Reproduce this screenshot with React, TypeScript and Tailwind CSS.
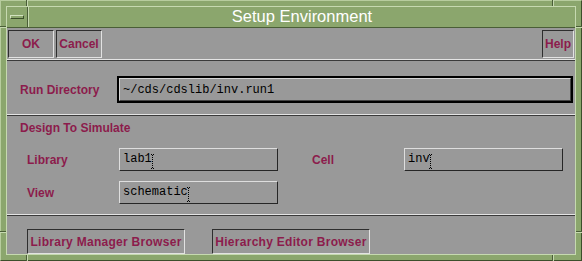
import React from "react";

const SANS = "font-['Liberation_Sans',Arial,sans-serif]";
const MONO = "font-['Liberation_Mono','Courier_New',monospace]";

function Cursor() {
  const dots: [number, number][] = [
    [1, 0], [3, 0],
    [2, 1], [2, 3], [2, 5], [2, 7], [2, 9], [2, 11], [2, 13],
    [1, 14], [3, 14],
  ];
  return (
    <svg
      width="5"
      height="15"
      viewBox="0 0 5 15"
      shapeRendering="crispEdges"
      className="absolute top-[2px] -right-[3px]"
    >
      {dots.map(([x, y], i) => (
        <rect key={i} x={x} y={y} width="1" height="1" fill="#000" />
      ))}
    </svg>
  );
}

function Field({ value, w }: { value: string; w: string }) {
  return (
    <div
      className={`${w} h-[23px] border border-t-[#dedede] border-l-[#dedede] border-b-[#262626] border-r-[#262626] bg-[#999999] flex items-center pl-[3px]`}
    >
      <span className={`relative ${MONO} text-[12px] leading-[15px] text-black`}>
        {value}
        <Cursor />
      </span>
    </div>
  );
}

function Btn({ label, w, h, extra = "" }: { label: string; w: string; h: string; extra?: string }) {
  return (
    <div
      className={`${w} ${h} border border-t-[#2e2e2e] border-l-[#2e2e2e] border-b-[#e2e2e2] border-r-[#e2e2e2] flex items-center justify-center ${SANS} font-bold text-[12px] text-[#8c1c4c] ${extra}`}
    >
      {label}
    </div>
  );
}

function Sep() {
  return <div className="h-[2px] border-t border-t-[#e4e4e4] border-b border-b-[#3a3a3a]" />;
}

function Label({ text, w }: { text: string; w: string }) {
  return (
    <div className={`${w} h-full flex items-center ${SANS} font-bold text-[12px] text-[#8c1c4c]`}>
      {text}
    </div>
  );
}

export default function App() {
  return (
    <div className="w-[582px] h-[261px] overflow-hidden">
      <div className="relative w-[582px] h-[261px] bg-[#8ba66d] border border-t-[#b7cc9e] border-l-[#b7cc9e] border-b-[#3c4f2b] border-r-[#3c4f2b] p-[5px]">
        {/* resize handle marks */}
        <div className="absolute left-[25px] top-[-1px] w-[2px] h-[6px] border-l border-l-[#4a5e37] border-r border-r-[#c6d9b0]" />
        <div className="absolute left-[551px] top-[-1px] w-[2px] h-[6px] border-l border-l-[#4a5e37] border-r border-r-[#c6d9b0]" />
        <div className="absolute left-[25px] top-[254px] w-[2px] h-[6px] border-l border-l-[#4a5e37] border-r border-r-[#c6d9b0]" />
        <div className="absolute left-[551px] top-[254px] w-[2px] h-[6px] border-l border-l-[#4a5e37] border-r border-r-[#c6d9b0]" />
        <div className="absolute left-[-1px] top-[25px] w-[6px] h-[2px] border-t border-t-[#4a5e37] border-b border-b-[#c6d9b0]" />
        <div className="absolute left-[-1px] top-[230px] w-[6px] h-[2px] border-t border-t-[#4a5e37] border-b border-b-[#c6d9b0]" />
        <div className="absolute left-[575px] top-[25px] w-[6px] h-[2px] border-t border-t-[#4a5e37] border-b border-b-[#c6d9b0]" />
        <div className="absolute left-[575px] top-[230px] w-[6px] h-[2px] border-t border-t-[#4a5e37] border-b border-b-[#c6d9b0]" />

        <div className="w-[570px] h-[249px] border border-[#c6d9b0] flex flex-col">
          {/* title bar */}
          <div className="h-[21px] flex border-b border-b-[#4a5e37]">
            <div className="w-[21px] h-full border-r border-r-[#4a5e37] flex items-center justify-center">
              <div className="w-[14px] h-[4px] border border-t-[#d2e2bf] border-l-[#d2e2bf] border-b-[#3c4f2b] border-r-[#3c4f2b]" />
            </div>
            <div className={`flex-1 h-full border-l border-l-[#c6d9b0] flex items-center justify-center text-white ${SANS} text-[16.5px] leading-[19px] pb-[1px]`}>
              Setup Environment
            </div>
          </div>

          <div className="flex-1 bg-[#999999] flex flex-col">
            {/* button row */}
            <div className="h-[31px] pt-[2px] pb-[1px] px-[1px] flex">
              <Btn label="OK" w="w-[46px]" h="h-[28px]" />
              <Btn label="Cancel" w="w-[46px]" h="h-[28px]" extra="ml-[2px]" />
              <div className="flex-1" />
              <Btn label="Help" w="w-[32px]" h="h-[28px]" />
            </div>
            <Sep />

            {/* run directory */}
            <div className="h-[53px] pl-[13px] pr-[2px] pt-[15px] flex">
              <div className="h-[27px]">
                <Label text="Run Directory" w="w-[97px]" />
              </div>
              <div className="flex-1 h-[27px] border-2 border-black">
                <div className={`w-full h-full border border-t-[#d4d4d4] border-l-[#d4d4d4] border-b-[#444444] border-r-[#444444] flex items-center pl-[3px] ${MONO} text-[12px] text-black`}>
                  ~/cds/cdslib/inv.run1
                </div>
              </div>
            </div>
            <Sep />

            {/* design to simulate */}
            <div className="h-[98px] pl-[13px] pt-[5px] flex flex-col">
              <div className={`${SANS} font-bold text-[12px] leading-[14px] text-[#8c1c4c]`}>
                Design To Simulate
              </div>
              <div className="mt-[13px] ml-[7px] flex flex-col gap-[10px]">
                <div className="h-[23px] flex">
                  <Label text="Library" w="w-[92px]" />
                  <Field value="lab1" w="w-[159px]" />
                  <div className="w-[34px]" />
                  <Label text="Cell" w="w-[92px]" />
                  <Field value="inv" w="w-[159px]" />
                </div>
                <div className="h-[23px] flex">
                  <Label text="View" w="w-[92px]" />
                  <Field value="schematic" w="w-[159px]" />
                </div>
              </div>
            </div>
            <Sep />

            {/* browsers */}
            <div className="h-[38px] pt-[13px] pl-[20px] flex gap-[27px]">
              <Btn label="Library Manager Browser" w="w-[158px]" h="h-[25px]" extra="tracking-[0.28px]" />
              <Btn label="Hierarchy Editor Browser" w="w-[158px]" h="h-[25px]" extra="tracking-[0.28px]" />
            </div>
          </div>
        </div>
      </div>
    </div>
  );
}
